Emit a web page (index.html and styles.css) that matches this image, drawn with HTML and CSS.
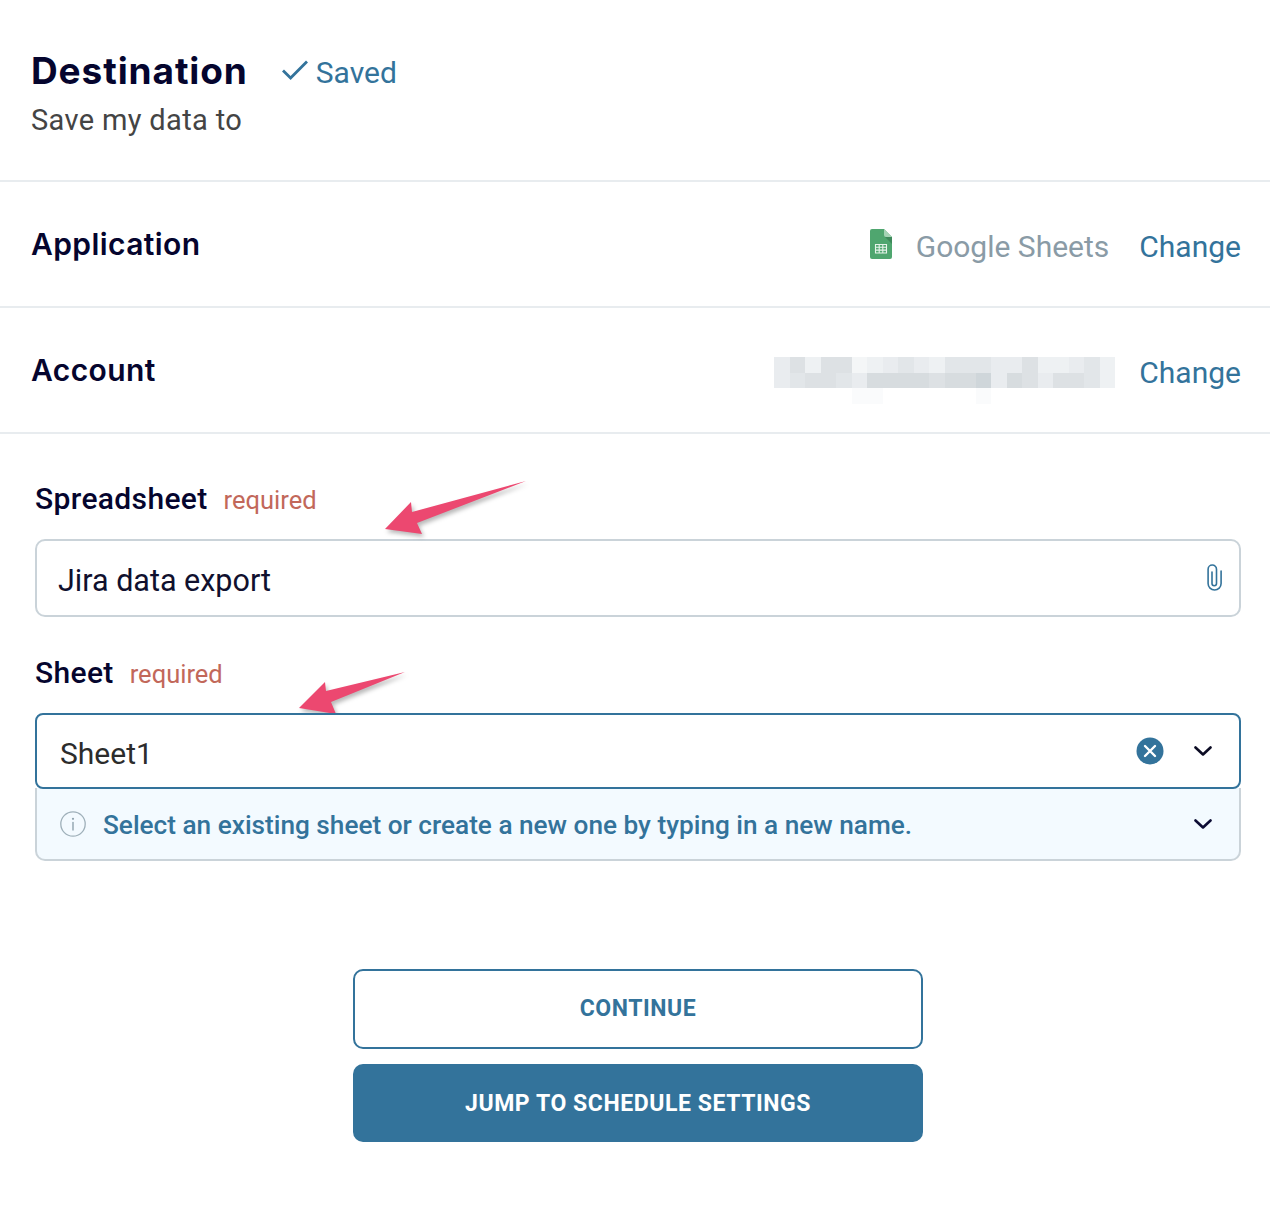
FILE: index.html
```html
<!DOCTYPE html>
<html lang="en">
<head>
<meta charset="utf-8">
<title>Destination</title>
<link rel="stylesheet" href="styles.css">
</head>
<body>
<main class="page">
  <header class="head">
    <div class="head-title">
      <h1>Destination</h1>
      <span class="saved">
        <svg class="check" viewBox="0 0 26 20" width="26" height="20"><path d="M1 10.500 8.600 18 25 1.500" fill="none" stroke="#33739b" stroke-width="2.800"/></svg>
        Saved
      </span>
    </div>
    <p class="sub">Save my data to</p>
  </header>

  <section class="row">
    <h2>Application</h2>
    <div class="row-end">
      <svg class="sheets" viewBox="0 0 22 30" width="22" height="30">
        <path d="M2 0H14L22 8V28a2 2 0 0 1-2 2H2a2 2 0 0 1-2-2V2a2 2 0 0 1 2-2Z" fill="#4fa66f"/>
        <path d="M14 0 22 8H16a2 2 0 0 1-2-2Z" fill="#a5d3b5"/>
        <path d="M15 8 22 15V8Z" fill="#3e8a5b"/>
        <path d="M5.500 15.500H16.500V24H5.500Z M5.500 18.300H16.500 M5.500 21.100H16.500 M9.200 15.500V24 M12.800 15.500V24" fill="none" stroke="#e6f3ea" stroke-width="1.100"/>
      </svg>
      <span class="app-name">Google Sheets</span>
      <a class="change">Change</a>
    </div>
  </section>

  <section class="row">
    <h2>Account</h2>
    <div class="row-end">
      <div class="blur" aria-hidden="true">
        <i class="a"></i><i class="c"></i><i class="a0"></i><i class="c"></i><i class="c"></i><i class="z"></i><i class="a0"></i><i class="a"></i><i class="b"></i><i class="a"></i><i class="a0"></i><i class="b"></i><i class="b"></i><i class="b"></i><i class="a"></i><i class="a"></i><i class="c"></i><i class="a0"></i><i class="a0"></i><i class="a"></i><i class="b"></i><i class="a0"></i>
        <i class="a"></i><i class="b"></i><i class="c"></i><i class="c"></i><i class="b"></i><i class="a"></i><i class="d"></i><i class="d"></i><i class="d"></i><i class="d"></i><i class="c"></i><i class="d"></i><i class="d"></i><i class="e"></i><i class="a"></i><i class="d"></i><i class="c"></i><i class="a"></i><i class="c"></i><i class="c"></i><i class="b"></i><i class="a0"></i>
        <i></i><i></i><i></i><i></i><i></i><i class="f"></i><i class="f"></i><i></i><i></i><i></i><i></i><i></i><i></i><i class="f"></i><i></i><i></i><i></i><i></i><i></i><i></i><i></i><i></i>
      </div>
      <a class="change">Change</a>
    </div>
  </section>

  <form class="form">
    <div class="field">
      <div class="label"><strong>Spreadsheet</strong><em>required</em></div>
      <div class="input">
        <span class="value">Jira data export</span>
        <svg class="clip" viewBox="0 0 16 28" width="16" height="28"><path d="M6 8V19.500a2.250 2.250 0 0 0 4.500 0V5.200a4.200 4.200 0 0 0-8.400 0V19.500a6.500 6.500 0 0 0 13 0V7" fill="none" stroke="#33739b" stroke-width="1.600" stroke-linecap="round"/></svg>
      </div>
    </div>

    <div class="field field-sheet">
      <div class="label"><strong>Sheet</strong><em>required</em></div>
      <div class="select">
        <span class="value value-sheet">Sheet1</span>
        <svg class="clear" viewBox="0 0 28 28" width="28" height="28"><circle cx="14" cy="14" r="13.500" fill="#33739b"/><path d="M9 9 19 19M19 9 9 19" stroke="#fff" stroke-width="2.400" stroke-linecap="round"/></svg>
        <svg class="chev" viewBox="0 0 18 10" width="18" height="10"><path d="M1.500 1.500 9 8.500 16.500 1.500" fill="none" stroke="#0c0c24" stroke-width="2.600" stroke-linecap="round" stroke-linejoin="round"/></svg>
      </div>
      <div class="hint">
        <svg class="info" viewBox="0 0 26 26" width="26" height="26"><circle cx="13" cy="13" r="12.200" fill="none" stroke="#9fb0ba" stroke-width="1.300"/><circle cx="13" cy="7.800" r="1.100" fill="#8fa2ae"/><path d="M13 11.500V19" stroke="#8fa2ae" stroke-width="1.400" stroke-linecap="round"/></svg>
        <span class="hint-text">Select an existing sheet or create a new one by typing in a new name.</span>
        <svg class="chev" viewBox="0 0 18 10" width="18" height="10"><path d="M1.500 1.500 9 8.500 16.500 1.500" fill="none" stroke="#0c0c34" stroke-width="2.600" stroke-linecap="round" stroke-linejoin="round"/></svg>
      </div>
    </div>

    <div class="actions">
      <button type="button" class="btn btn-outline">CONTINUE</button>
      <button type="button" class="btn btn-solid">JUMP TO SCHEDULE SETTINGS</button>
    </div>
  </form>

  <svg class="arrows" viewBox="0 0 1270 1222" width="1270" height="1222" aria-hidden="true">
    <polygon points="526,481 412,512 411,502 385,529 422,534 417,523" fill="#ec4870"/>
    <polygon points="405,672 326,691 325,682 299,708 336,714 331,702" fill="#ec4870"/>
  </svg>
</main>
</body>
</html>
```

FILE: styles.css
```css
* { box-sizing: border-box; }
html, body { margin: 0; padding: 0; background: #fff; }
body { font-family: Roboto, "Liberation Sans", sans-serif; color: #0c0c2e; }

.page { position: relative; width: 1270px; height: 1222px; overflow: hidden; }

.head { height: 182px; padding: 48px 31px 0; border-bottom: 2px solid #e8ecef; }
.head-title { display: flex; align-items: center; gap: 34px; height: 46px; }
h1 { margin: 0; font: 700 37px/46px Inter, sans-serif; letter-spacing: .9px; color: #05052e; }
.saved { display: flex; align-items: center; gap: 8px; font-size: 30px; line-height: 40px; color: #33739b; padding-top: 3px; }
.check { margin-top: -6px; }
.sub { margin: 8px 0 0; font-size: 29px; line-height: 36px; letter-spacing: .35px; color: #444; }

.row { height: 126px; padding: 0 29px 2px 31px; display: flex; align-items: center; justify-content: space-between; border-bottom: 2px solid #e8ecef; }
h2 { margin: 1px 0 0; font: 600 30px/36px Inter, sans-serif; letter-spacing: .4px; color: #05052e; }
.row-end { display: flex; align-items: center; }
.sheets { margin-right: 24px; margin-top: 2px; }
.app-name { font-size: 30px; line-height: 40px; color: #8a9ba6; margin-right: 30px; margin-top: 8px; }
.change { font-size: 30px; line-height: 40px; color: #33739b; margin-top: 8px; }

.blur { display: grid; grid-template-columns: repeat(22, 15.500px); grid-auto-rows: 15.500px; margin-right: 24px; margin-top: 23px; }
.blur i { display: block; }
.blur .f { background: #fafbfc; }
.blur .z { background: #f4f6f7; }
.blur .a0 { background: #eef1f3; }
.blur .a { background: #e9ecef; }
.blur .b { background: #e2e6e9; }
.blur .c { background: #dde1e4; }
.blur .d { background: #d7dcdf; }
.blur .e { background: #cfd6da; }

.form { padding: 0 29px 0 35px; }
.field { padding-top: 45px; }
.field-sheet { padding-top: 36px; }
.label { display: flex; align-items: baseline; gap: 16px; height: 40px; }
.label strong { font: 500 30px/40px Roboto, sans-serif; letter-spacing: .35px; color: #05052e; }
.label em { font-style: normal; font-size: 25.500px; line-height: 40px; color: #c2685a; }

.input { display: flex; align-items: center; justify-content: space-between; height: 78px; margin-top: 20px; padding: 0 17px 0 21px; border: 2px solid #cad3d9; border-radius: 10px; background: #fff; }
.value { font-size: 30.500px; line-height: 40px; padding-top: 6px; color: #10102e; }
.value-sheet { flex: 1; font-size: 30px; color: #2c2c2c; }
.select { display: flex; align-items: center; height: 76px; margin-top: 20px; padding: 0 27px 0 23px; border: 2px solid #33739b; border-radius: 8px; background: #fff; position: relative; z-index: 1; }
.clear { margin-right: 30px; }
.hint { display: flex; align-items: center; height: 73px; margin-top: -1px; padding: 0 27px 0 23px; border: 2px solid #cad3d9; border-top: 0; border-radius: 0 0 10px 10px; background: #f3faff; }
.info { margin-right: 17px; }
.hint-text { flex: 1; font-size: 26.200px; font-weight: 500; padding-top: 3px; color: #33739b; }

.actions { display: flex; flex-direction: column; align-items: center; gap: 15px; margin-top: 108px; }
.btn { width: 570px; height: 80px; border-radius: 10px; font: 700 23px/30px Roboto, sans-serif; letter-spacing: .56px; }
.btn-outline { padding-top: 1px; background: #fff; border: 2px solid #33739b; color: #33739b; }
.btn-solid { height: 78px; padding-top: 2px; background: #33739b; border: 0; color: #fff; }

.arrows { position: absolute; left: 0; top: 0; pointer-events: none; filter: drop-shadow(2px 3px 2px rgba(0,0,0,.28)); }
```
